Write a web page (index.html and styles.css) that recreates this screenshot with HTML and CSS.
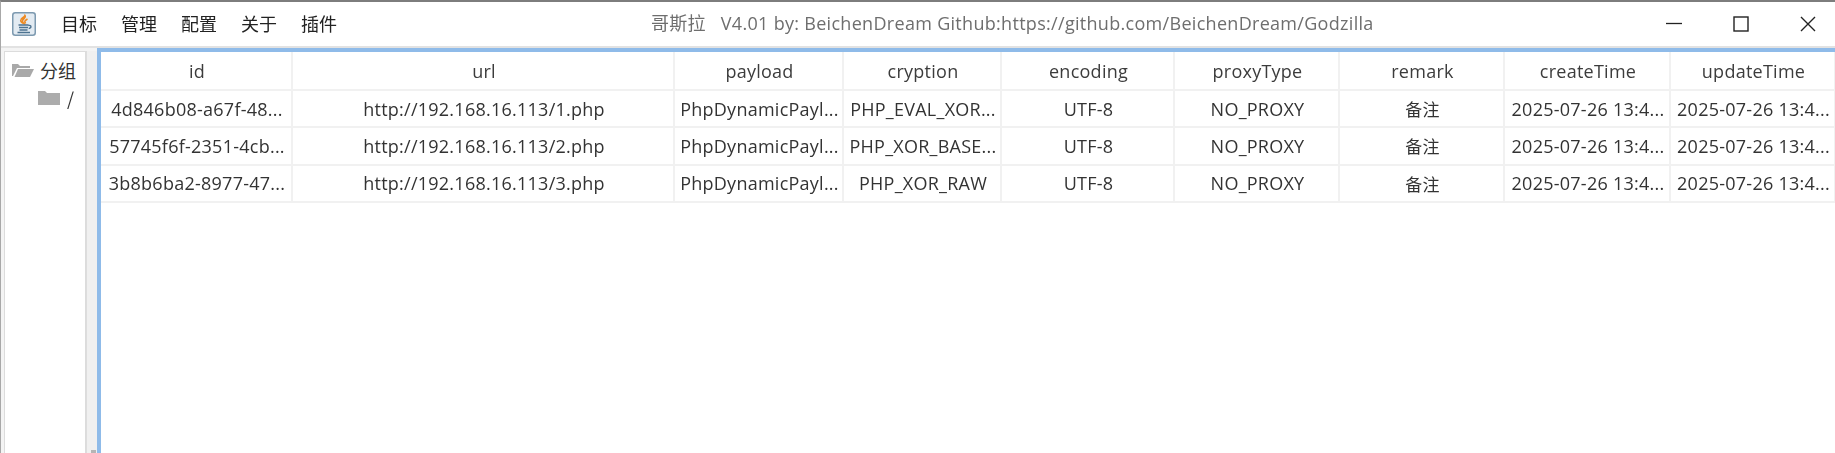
FILE: index.html
```html
<!DOCTYPE html>
<html lang="zh">
<head>
<meta charset="utf-8">
<title>哥斯拉</title>
<link rel="stylesheet" href="styles.css">
</head>
<body>
<div class="window">
  <header class="titlebar">
    <svg class="app-icon" viewBox="0 0 24 24" width="24" height="24">
      <rect x="0.75" y="0.75" width="22.5" height="22.5" rx="2.5" fill="#e3ebf2" stroke="#7d9ab0" stroke-width="1.5"/>
      <path d="M13 3.5c1.5 2-2.5 3.5-2.5 5.5 0 1 .7 1.7 1.2 2.5-2.7-1-3.6-2.6-2.6-4.2.8-1.4 3.4-2 3.9-3.8zM15.5 7c-1.5.8-3 1.6-2.6 3 .2.6.5 1 .7 1.5" fill="none" stroke="#ee8a22" stroke-width="1.6"/>
      <path d="M6.5 13h10M7 15.5h9M7.5 18h8M5.5 20.5h12.5M16.5 13.5c3-.8 3.5 2.5.2 3" fill="none" stroke="#4d7391" stroke-width="1.3"/>
    </svg>
    <nav class="menu">
      <span>目标</span><span>管理</span><span>配置</span><span>关于</span><span>插件</span>
    </nav>
    <div class="title">哥斯拉&nbsp;&nbsp;&nbsp;V4.01 by: BeichenDream Github:https://github.com/BeichenDream/Godzilla</div>
    <div class="controls">
      <svg viewBox="0 0 16 16" width="16" height="16"><path d="M0 7.5h16" stroke="#222" stroke-width="1.3"/></svg>
      <svg viewBox="0 0 16 16" width="16" height="16"><rect x="1" y="1" width="14" height="14" fill="none" stroke="#222" stroke-width="1.4"/></svg>
      <svg viewBox="0 0 16 16" width="16" height="16"><path d="M1 1l14 14M15 1L1 15" stroke="#222" stroke-width="1.4"/></svg>
    </div>
  </header>
  <main class="content">
    <aside class="tree">
      <div class="tree-box">
        <div class="node">
          <svg viewBox="0 0 24 16" width="24" height="16"><path d="M1 14V2h6l2 2h10v2H6L2 14z M3.5 15L7 7h16l-4 8z" fill="#a9a9a9"/></svg>
          <span>分组</span>
        </div>
        <div class="node child">
          <svg viewBox="0 0 22 16" width="22" height="16"><path d="M0 15V1h7l2 2h13v12z" fill="#acacac"/></svg>
          <span>/</span>
        </div>
      </div>
      <div class="gutter"><i class="thumb"></i></div>
    </aside>
    <section class="table-wrap">
      <table class="grid">
        <colgroup>
          <col class="c-id"><col class="c-url"><col class="c-payload"><col class="c-cryption"><col class="c-encoding"><col class="c-proxy"><col class="c-remark"><col class="c-create"><col class="c-update">
        </colgroup>
        <thead>
          <tr><th>id</th><th>url</th><th>payload</th><th>cryption</th><th>encoding</th><th>proxyType</th><th>remark</th><th>createTime</th><th>updateTime</th></tr>
        </thead>
        <tbody>
          <tr><td>4d846b08-a67f-48...</td><td>http://192.168.16.113/1.php</td><td>PhpDynamicPayl...</td><td>PHP_EVAL_XOR...</td><td>UTF-8</td><td>NO_PROXY</td><td class="note">备注</td><td>2025-07-26 13:4...</td><td>2025-07-26 13:4...</td></tr>
          <tr><td>57745f6f-2351-4cb...</td><td>http://192.168.16.113/2.php</td><td>PhpDynamicPayl...</td><td>PHP_XOR_BASE...</td><td>UTF-8</td><td>NO_PROXY</td><td class="note">备注</td><td>2025-07-26 13:4...</td><td>2025-07-26 13:4...</td></tr>
          <tr><td>3b8b6ba2-8977-47...</td><td>http://192.168.16.113/3.php</td><td>PhpDynamicPayl...</td><td>PHP_XOR_RAW</td><td>UTF-8</td><td>NO_PROXY</td><td class="note">备注</td><td>2025-07-26 13:4...</td><td>2025-07-26 13:4...</td></tr>
        </tbody>
      </table>
    </section>
  </main>
</div>
</body>
</html>
```
FILE: styles.css
```css
* { box-sizing: border-box; }
html, body { margin: 0; height: 100%; overflow: hidden; background: #fff; }
body { font-family: "Open Sans", "Noto Sans CJK SC", sans-serif; font-size: 18px; color: #333; }
.window {
  height: 453px;
  display: flex;
  flex-direction: column;
  border-top: 2px solid #7d7d7d;
  border-left: 1px solid #a8a8a8;
  filter: blur(0.4px);
}
.titlebar {
  height: 46px;
  flex: none;
  display: flex;
  align-items: center;
  padding: 0 0 0 11px;
  position: relative;
  border-bottom: 2px solid #e2e2e2;
}
.app-icon { flex: none; }
.menu {
  display: flex;
  gap: 24px;
  margin-left: 25px;
  font-family: "Noto Sans CJK SC", sans-serif;
  color: #222;
  position: relative;
  top: -1px;
}
.title {
  position: absolute;
  left: 650px;
  top: 8px;
  letter-spacing: 0.3px;
  color: #6e6e6e;
  white-space: nowrap;
  line-height: 26px;
}
.controls {
  margin-left: auto;
  display: flex;
  gap: 51px;
  padding-right: 19px;
}
.content { flex: 1; display: flex; min-height: 0; }
.tree { width: 96px; flex: none; display: flex; padding-top: 3px; background: #f4f4f4; }
.tree-box {
  width: 82px;
  margin-left: 3px;
  background: #fff;
  border: 1px solid #dcdcdc;
  border-bottom: 0;
  padding-top: 4px;
}
.gutter { flex: 1; position: relative; border-left: 1px solid #ddd; background: #f0f0f0; }
.thumb { position: absolute; left: 4px; bottom: 0; width: 5px; height: 3px; background: #b5b5b5; }
.node { display: flex; align-items: center; gap: 5px; height: 28px; padding-left: 6px; font-family: "Noto Sans CJK SC", sans-serif; color: #333; }
.child { padding-left: 33px; gap: 7px; }
.table-wrap {
  flex: 1;
  min-width: 0;
  border-top: 4px solid #8fbbe9;
  border-left: 4px solid #8fbbe9;
  overflow: hidden;
}
.grid { table-layout: fixed; width: 1735px; border-collapse: separate; border-spacing: 0; }
.c-id { width: 192px; }
.c-url { width: 382px; }
.c-payload { width: 169px; }
.c-cryption { width: 158px; }
.c-encoding { width: 173px; }
.c-proxy { width: 165px; }
.c-remark { width: 165px; }
.c-create { width: 166px; }
.c-update { width: 165px; }
th, td {
  padding: 0 0 0 2px;
  text-align: center;
  white-space: nowrap;
  overflow: hidden;
  letter-spacing: 0.25px;
  border-right: 2px solid #f1f1f1;
  border-bottom: 2px solid #f1f1f1;
  font-weight: 400;
}
th { height: 39px; color: #3c3c3c; }
td { height: 37.33px; color: #333; }
.note { font-size: 17px; }
```
